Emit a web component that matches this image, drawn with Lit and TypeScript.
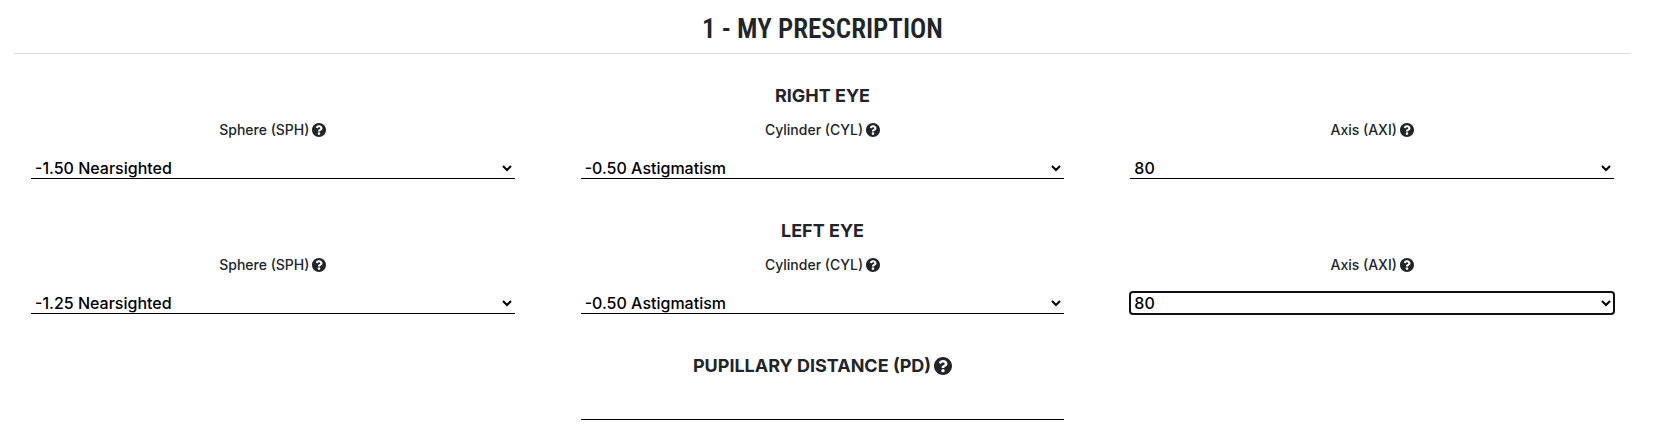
import { LitElement, html, css } from "lit";
import { customElement, property } from "lit/decorators.js";

interface Field {
  id: string;
  label: string;
  value: string;
  active?: boolean;
}

interface Eye {
  title: string;
  fields: Field[];
}

const EYES: Eye[] = [
  {
    title: "RIGHT EYE",
    fields: [
      { id: "right-sph", label: "Sphere (SPH)", value: "-1.50 Nearsighted" },
      { id: "right-cyl", label: "Cylinder (CYL)", value: "-0.50 Astigmatism" },
      { id: "right-axi", label: "Axis (AXI)", value: "80" },
    ],
  },
  {
    title: "LEFT EYE",
    fields: [
      { id: "left-sph", label: "Sphere (SPH)", value: "-1.25 Nearsighted" },
      { id: "left-cyl", label: "Cylinder (CYL)", value: "-0.50 Astigmatism" },
      { id: "left-axi", label: "Axis (AXI)", value: "80", active: true },
    ],
  },
];

@customElement("help-icon")
export class HelpIcon extends LitElement {
  static styles = css`
    :host {
      display: inline-flex;
      width: 1em;
      height: 1em;
    }
    .icon {
      width: 100%;
      height: 100%;
      fill: currentColor;
    }
  `;

  render() {
    return html`<svg class="icon" viewBox="8 8 496 496" aria-hidden="true">
      <path
        d="M504 256c0 136.997-111.043 248-248 248S8 392.997 8 256C8 119.083 119.043 8 256 8s248 111.083 248 248zM262.655 90c-54.497 0-89.255 22.957-116.549 63.758-3.536 5.286-2.353 12.415 2.715 16.258l34.699 26.31c5.205 3.947 12.621 3.008 16.665-2.122 17.864-22.658 30.113-35.797 57.303-35.797 20.429 0 45.698 13.148 45.698 32.958 0 14.976-12.363 22.667-32.534 33.976C247.128 238.528 216 254.941 216 296v4c0 6.627 5.373 12 12 12h56c6.627 0 12-5.373 12-12v-1.333c0-28.462 83.186-29.647 83.186-106.667 0-58.002-60.165-102-116.531-102zM256 338c-25.365 0-46 20.635-46 46 0 25.364 20.635 46 46 46s46-20.636 46-46c0-25.365-20.635-46-46-46z"
      />
    </svg>`;
  }
}

@customElement("lens-field")
export class LensField extends LitElement {
  @property({ attribute: false }) field!: Field;

  static styles = css`
    :host {
      display: flex;
      flex-direction: column;
      gap: 17px;
      min-width: 0;
    }
    .label {
      display: flex;
      align-items: center;
      justify-content: center;
      gap: 3px;
      font-size: 14px;
      font-weight: 500;
      line-height: 20px;
    }
    .select {
      box-sizing: border-box;
      width: 100%;
      height: 22px;
      margin: 0;
      padding: 0 2px 0 0;
      border: 0;
      border-bottom: 1px solid #000;
      border-radius: 0;
      background: #fff;
      color: #000;
      font: inherit;
      font-size: 16px;
      font-weight: 500;
    }
    .select.active,
    .select:focus {
      outline: 2px solid #101010;
      outline-offset: -1px;
      border-radius: 3px;
    }
  `;

  render() {
    const { id, label, value, active } = this.field;
    return html`
      <label class="label" for=${id}>${label}<help-icon></help-icon></label>
      <select class="select ${active ? "active" : ""}" id=${id}>
        <option selected>${value}</option>
      </select>
    `;
  }
}

@customElement("app-root")
export class AppRoot extends LitElement {
  static styles = css`
    :host {
      display: block;
      padding: 9px 24px 8px 14px;
      background: #fff;
      color: #212529;
      font-family: Inter, sans-serif;
    }
    .title {
      margin: 0;
      padding-bottom: 4px;
      border-bottom: 1px solid #dedede;
      font-family: "Roboto Condensed", "Liberation Sans Narrow", sans-serif;
      font-size: 27px;
      font-weight: 600;
      line-height: 40px;
      text-align: center;
    }
    .section {
      padding: 30px 17px 0;
    }
    .section + .section {
      padding-top: 40px;
    }
    .heading {
      display: flex;
      align-items: center;
      justify-content: center;
      gap: 3px;
      margin: 0 0 12px;
      font-size: 18px;
      font-weight: 700;
      line-height: 24px;
    }
    .fields {
      display: grid;
      grid-template-columns: repeat(3, minmax(0, 1fr));
      gap: 66px;
    }
    .distance {
      grid-column: 2;
      box-sizing: border-box;
      width: 100%;
      height: 30px;
      padding: 0 4px;
      border: 0;
      border-bottom: 1px solid #000;
      background: transparent;
      color: #000;
      font: inherit;
    }
  `;

  render() {
    return html`
      <h2 class="title">1 - MY PRESCRIPTION</h2>
      ${EYES.map(
        (eye) => html`<section class="section">
          <h3 class="heading">${eye.title}</h3>
          <div class="fields">
            ${eye.fields.map((f) => html`<lens-field .field=${f}></lens-field>`)}
          </div>
        </section>`
      )}
      <section class="section">
        <h3 class="heading">
          <label for="pd">PUPILLARY DISTANCE (PD)</label><help-icon></help-icon>
        </h3>
        <div class="fields">
          <input class="distance" id="pd" type="text" />
        </div>
      </section>
    `;
  }
}
